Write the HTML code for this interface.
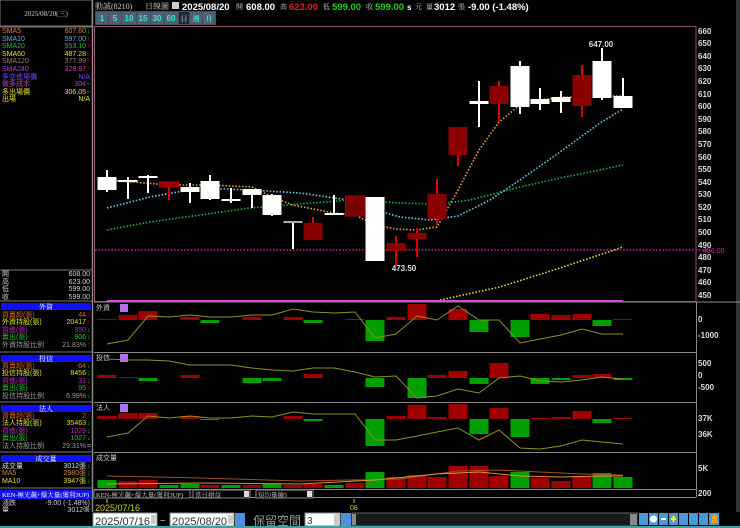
<!DOCTYPE html>
<html><head><meta charset="utf-8"><style>
body{margin:0;background:#000;width:740px;height:528px;overflow:hidden}
svg{display:block}
text{font-family:"Liberation Sans","Noto Sans CJK TC",sans-serif}
.s{font-family:"Liberation Serif","Noto Serif CJK SC",serif;font-size:7px}
.ax{font-size:8px;fill:#ddd;font-weight:bold}
</style></head><body>
<svg width="740" height="528" viewBox="0 0 740 528" xmlns="http://www.w3.org/2000/svg">
<rect width="740" height="528" fill="#000"/>
<rect x="0" y="0" width="92" height="26" fill="#000" stroke="#777"/>
<line x1="92.5" y1="0" x2="92.5" y2="513" stroke="#888" stroke-width="1.5"/>
<line x1="0" y1="27" x2="92" y2="27" stroke="#777"/>
<text x="46" y="16" text-anchor="middle" class="s" fill="#ccc">2025/08/20(三)</text>
<g class="s">
<text x="2" y="33" fill="#e08030">SMA5</text><text x="86" y="33" text-anchor="end" fill="#e08030">607.60</text><text x="87" y="33" fill="#0c0">↓</text>
<text x="2" y="41" fill="#60b0e0">SMA10</text><text x="86" y="41" text-anchor="end" fill="#60b0e0">597.00</text><text x="87" y="41" fill="#e00">↑</text>
<text x="2" y="48" fill="#20c020">SMA20</text><text x="86" y="48" text-anchor="end" fill="#20c020">553.10</text><text x="87" y="48" fill="#e00">↑</text>
<text x="2" y="56" fill="#e0e020">SMA60</text><text x="86" y="56" text-anchor="end" fill="#e0e020">487.28</text><text x="87" y="56" fill="#e00">↑</text>
<text x="2" y="63" fill="#a08060">SMA120</text><text x="86" y="63" text-anchor="end" fill="#a08060">377.99</text><text x="87" y="63" fill="#e00">↑</text>
<text x="2" y="71" fill="#c040c0">SMA240</text><text x="86" y="71" text-anchor="end" fill="#c040c0">328.87</text><text x="87" y="71" fill="#e00">↑</text>
<text x="2" y="79" fill="#8040ff">多空進場價</text><text x="90" y="79" text-anchor="end" fill="#8040ff">N/A</text>
<text x="2" y="86" fill="#c040c0">做多成本</text><text x="86" y="86" text-anchor="end" fill="#c040c0">304</text><text x="87" y="86" fill="#ccc">-</text>
<text x="2" y="94" fill="#e0e020">多出場價</text><text x="86" y="94" text-anchor="end" fill="#e0e020">306.05</text><text x="87" y="94" fill="#ccc">-</text>
<text x="2" y="101" fill="#e0e020">出場</text><text x="90" y="101" text-anchor="end" fill="#e0e020">N/A</text>
</g>
<line x1="0" y1="270" x2="92" y2="270" stroke="#777"/>
<g class="s" fill="#ccc">
<text x="2" y="276">開</text><text x="90" y="276" text-anchor="end">608.00</text>
<text x="2" y="284">高</text><text x="90" y="284" text-anchor="end">623.00</text>
<text x="2" y="291">低</text><text x="90" y="291" text-anchor="end">599.00</text>
<text x="2" y="299">收</text><text x="90" y="299" text-anchor="end">599.00</text>
</g>
<line x1="0" y1="301" x2="92" y2="301" stroke="#777"/>
<rect x="1" y="303" width="90" height="7" fill="#1010f0"/><text x="46" y="309" text-anchor="middle" class="s" fill="#fff">外資</text>
<g class="s">
<text x="2" y="317" fill="#e06020">買賣超(張)</text><text x="86" y="317" text-anchor="end" fill="#e06020">44</text><text x="87" y="317" fill="#e00">↑</text>
<text x="2" y="324" fill="#e0e020">外資持股(張)</text><text x="86" y="324" text-anchor="end" fill="#e0e020">20417</text><text x="87" y="324" fill="#e00">↑</text>
<text x="2" y="332" fill="#c020c0">買進(張)</text><text x="86" y="332" text-anchor="end" fill="#c020c0">950</text><text x="87" y="332" fill="#0c0">↓</text>
<text x="2" y="339" fill="#20c020">賣出(張)</text><text x="86" y="339" text-anchor="end" fill="#20c020">906</text><text x="87" y="339" fill="#0c0">↓</text>
<text x="2" y="347" fill="#999">外資持股比例</text><text x="86" y="347" text-anchor="end" fill="#999">21.83%</text><text x="87" y="347" fill="#e00">↑</text>
</g>
<line x1="0" y1="352" x2="92" y2="352" stroke="#777"/>
<rect x="1" y="355" width="90" height="7" fill="#1010f0"/><text x="46" y="361" text-anchor="middle" class="s" fill="#fff">投信</text>
<g class="s">
<text x="2" y="368" fill="#e06020">買賣超(張)</text><text x="86" y="368" text-anchor="end" fill="#e06020">-64</text><text x="87" y="368" fill="#0c0">↓</text>
<text x="2" y="375" fill="#e0e020">投信持股(張)</text><text x="86" y="375" text-anchor="end" fill="#e0e020">8456</text><text x="87" y="375" fill="#0c0">↓</text>
<text x="2" y="383" fill="#c020c0">買進(張)</text><text x="86" y="383" text-anchor="end" fill="#c020c0">31</text><text x="87" y="383" fill="#0c0">↓</text>
<text x="2" y="390" fill="#20c020">賣出(張)</text><text x="86" y="390" text-anchor="end" fill="#20c020">95</text><text x="87" y="390" fill="#e00">↑</text>
<text x="2" y="398" fill="#999">投信持股比例</text><text x="86" y="398" text-anchor="end" fill="#999">6.99%</text><text x="87" y="398" fill="#0c0">↓</text>
</g>
<line x1="0" y1="402" x2="92" y2="402" stroke="#777"/>
<rect x="1" y="405" width="90" height="7" fill="#1010f0"/><text x="46" y="411" text-anchor="middle" class="s" fill="#fff">法人</text>
<g class="s">
<text x="2" y="418" fill="#e06020">買賣超(張)</text><text x="86" y="418" text-anchor="end" fill="#e06020">2</text><text x="87" y="418" fill="#e00">↑</text>
<text x="2" y="425" fill="#e0e020">法人持股(張)</text><text x="86" y="425" text-anchor="end" fill="#e0e020">35463</text><text x="87" y="425" fill="#0c0">↓</text>
<text x="2" y="433" fill="#c020c0">買進(張)</text><text x="86" y="433" text-anchor="end" fill="#c020c0">1029</text><text x="87" y="433" fill="#0c0">↓</text>
<text x="2" y="440" fill="#20c020">賣出(張)</text><text x="86" y="440" text-anchor="end" fill="#20c020">1027</text><text x="87" y="440" fill="#0c0">↓</text>
<text x="2" y="448" fill="#999">法人持股比例</text><text x="86" y="448" text-anchor="end" fill="#999">29.31%</text><text x="87" y="448" fill="#ccc">=</text>
</g>
<line x1="0" y1="452" x2="92" y2="452" stroke="#777"/>
<rect x="1" y="455" width="90" height="7" fill="#1010f0"/><text x="46" y="461" text-anchor="middle" class="s" fill="#fff">成交量</text>
<g class="s">
<text x="2" y="468" fill="#ddd">成交量</text><text x="86" y="468" text-anchor="end" fill="#ddd">3012張</text><text x="87" y="468" fill="#0c0">↓</text>
<text x="2" y="475" fill="#e08030">MA5</text><text x="86" y="475" text-anchor="end" fill="#e08030">2980張</text><text x="87" y="475" fill="#0c0">↓</text>
<text x="2" y="483" fill="#e0e020">MA10</text><text x="86" y="483" text-anchor="end" fill="#e0e020">3947張</text><text x="87" y="483" fill="#0c0">↓</text>
</g>
<line x1="0" y1="488" x2="92" y2="488" stroke="#777"/>
<rect x="0" y="490" width="92" height="9" fill="#1010f0"/><text x="2" y="497" class="s" fill="#fff" style="font-size:6.5px">KEN-極光飆+爆大量(獲利3UP)</text>
<g class="s" fill="#ccc"><text x="2" y="505">漲跌</text><text x="90" y="505" text-anchor="end">-9.00 (-1.48%)</text>
<text x="2" y="512">量</text><text x="90" y="512" text-anchor="end">3012張</text></g>

<g>
<text x="95" y="9" class="s" fill="#ccc" style="font-size:8px">動誠(8210)</text>
<text x="145" y="9" class="s" fill="#ccc" style="font-size:8px">日線圖</text>
<rect x="172" y="2" width="7" height="7" fill="#ccc"/>
<text x="182" y="10" fill="#fff" font-weight="bold" style="font-size:9.5px">2025/08/20</text>
<text x="236" y="9" class="s" fill="#ccc">開</text><text x="246" y="10" fill="#fff" font-weight="bold" style="font-size:9.5px">608.00</text>
<text x="280" y="9" class="s" fill="#ccc">高</text><text x="289" y="10" fill="#e02020" font-weight="bold" style="font-size:9.5px">623.00</text>
<text x="323" y="9" class="s" fill="#ccc">低</text><text x="332" y="10" fill="#20d020" font-weight="bold" style="font-size:9.5px">599.00</text>
<text x="366" y="9" class="s" fill="#ccc">收</text><text x="375" y="10" fill="#20d020" font-weight="bold" style="font-size:9.5px">599.00</text>
<text x="407" y="10" fill="#fff" font-weight="bold" style="font-size:8px">s</text><text x="415" y="9" class="s" fill="#ccc">元</text>
<text x="426" y="9" class="s" fill="#ccc">量</text><text x="434" y="10" fill="#fff" font-weight="bold" style="font-size:9.5px">3012</text><text x="458" y="9" class="s" fill="#ccc">張</text>
<text x="468" y="10" fill="#fff" font-weight="bold" style="font-size:9.5px">-9.00 (-1.48%)</text>
</g>
<rect x="95" y="11" width="121" height="14" fill="#405060"/>
<g font-size="8" fill="#40e0e0" font-weight="bold" text-anchor="middle">
<rect x="96" y="12" width="12" height="12" fill="#506070"/><text x="102" y="21">1</text>
<rect x="109" y="12" width="12" height="12" fill="#506070"/><text x="115" y="21">5</text>
<rect x="122" y="12" width="14" height="12" fill="#506070"/><text x="129" y="21">10</text>
<rect x="137" y="12" width="13" height="12" fill="#506070"/><text x="143" y="21">15</text>
<rect x="151" y="12" width="13" height="12" fill="#506070"/><text x="157" y="21">30</text>
<rect x="165" y="12" width="13" height="12" fill="#506070"/><text x="171" y="21">60</text>
<rect x="179" y="12" width="10" height="12" fill="#202830"/><text x="184" y="21" class="s" fill="#999">日</text>
<rect x="190" y="12" width="12" height="12" fill="#506070"/><text x="196" y="21" class="s">週</text>
<rect x="203" y="12" width="12" height="12" fill="#506070"/><text x="209" y="21" class="s">月</text>
</g>

<rect x="94.5" y="26.5" width="601.5" height="275" fill="none" stroke="#905070"/>
<g class="ax">
<text x="698" y="34">660</text><text x="698" y="46">650</text><text x="698" y="59">640</text><text x="698" y="71">630</text><text x="698" y="84">620</text><text x="698" y="97">610</text><text x="698" y="109">600</text><text x="698" y="122">590</text><text x="698" y="134">580</text><text x="698" y="147">570</text><text x="698" y="160">560</text><text x="698" y="172">550</text><text x="698" y="185">540</text><text x="698" y="197">530</text><text x="698" y="210">520</text><text x="698" y="222">510</text><text x="698" y="235">500</text><text x="698" y="248">490</text><text x="698" y="260">480</text><text x="698" y="273">470</text><text x="698" y="285">460</text><text x="698" y="298">450</text>
</g>
<rect x="736" y="0" width="4" height="528" fill="#333"/>
<g fill="none" stroke-width="1.6" stroke-dasharray="1.5 1.8">
<line x1="95" y1="250" x2="712" y2="250" stroke="#d020a0"/>
<polyline stroke="#e0e040" points="440,300 500,287 560,268 623,247"/>
<polyline stroke="#20b040" points="107,230 150,222 200,215 250,208 300,204 350,200 400,203 437,204 470,200 520,187 560,178 600,170 623,165"/>
<polyline stroke="#70c8e8" points="107,208 150,197 200,188 250,190 300,193 350,200 375,210 400,217 430,220 458,216 490,200 520,180 560,152 600,123 623,109"/>
<polyline stroke="#f0a040" points="107,180 169,185 210,185 252,187 272,197 293,205 334,213 355,215 375,225 396,229 417,230 437,227 458,190 479,150 499,122 520,105 540,100 561,97 582,97 602,96 623,96"/>
</g>
<text x="703" y="253" font-size="7" fill="#d020a0">486.00</text>
<line x1="107" y1="301" x2="623" y2="301" stroke="#e040e0" stroke-width="2"/>
<g fill="#fff" stroke="none">
<rect x="106" y="170" width="2" height="22"/><rect x="97.5" y="177" width="19" height="13"/>
<rect x="127" y="177" width="2" height="22"/><rect x="118.5" y="180" width="19" height="2"/>
<rect x="147" y="175" width="2" height="18"/><rect x="138.5" y="176" width="19" height="2"/>
<rect x="189" y="183" width="2" height="20"/><rect x="180.5" y="187" width="19" height="5"/>
<rect x="209" y="175" width="2" height="25"/><rect x="200.5" y="181" width="19" height="18"/>
<rect x="230" y="188" width="2" height="15"/><rect x="221.5" y="199" width="19" height="2"/>
<rect x="251" y="189" width="2" height="19"/><rect x="242.5" y="189" width="19" height="6"/>
<rect x="271" y="194" width="2" height="22"/><rect x="262.5" y="195" width="19" height="20"/>
<rect x="292" y="222" width="2" height="27"/><rect x="283.5" y="221" width="19" height="2" fill="#aaa"/>
<rect x="333" y="195" width="2" height="20"/><rect x="324.5" y="213" width="19" height="2"/>
<rect x="365.5" y="197" width="19" height="64"/>
<rect x="478" y="81" width="2" height="46"/><rect x="469.5" y="101" width="19" height="3"/>
<rect x="519" y="61" width="2" height="53"/><rect x="510.5" y="66" width="19" height="41"/>
<rect x="539" y="88" width="2" height="22"/><rect x="530.5" y="99" width="19" height="5"/>
<rect x="560" y="91" width="2" height="22"/><rect x="551.5" y="97" width="19" height="5"/>
<rect x="601" y="48" width="2" height="52"/><rect x="592.5" y="61" width="19" height="37"/>
<rect x="622" y="78" width="2" height="30"/><rect x="613.5" y="96" width="19" height="12"/>
</g>
<g>
<rect x="168" y="182" width="2" height="18" fill="#e00000"/><rect x="159.5" y="182" width="19" height="5" fill="#900000" stroke="#c00000"/>
<rect x="312" y="217" width="2" height="23" fill="#e00000"/><rect x="303.5" y="223" width="19" height="17" fill="#8a0000"/>
<rect x="345.5" y="196" width="19" height="20" fill="#7a0000" stroke="#a00000"/>
<rect x="395" y="236" width="2" height="29" fill="#e00000"/><rect x="386.5" y="243" width="19" height="8" fill="#8a0000"/>
<rect x="416" y="228" width="2" height="29" fill="#e00000"/><rect x="407.5" y="233" width="19" height="6" fill="#8a0000"/>
<rect x="436" y="179" width="2" height="46" fill="#e00000"/><rect x="427.5" y="194" width="19" height="25" fill="#8a0000"/>
<rect x="457" y="127" width="2" height="39" fill="#e00000"/><rect x="448.5" y="127" width="19" height="28" fill="#8a0000"/>
<rect x="498" y="81" width="2" height="40" fill="#e00000"/><rect x="489.5" y="86" width="19" height="18" fill="#8a0000"/>
<rect x="581" y="65" width="2" height="52" fill="#e00000"/><rect x="572.5" y="75" width="19" height="31" fill="#8a0000"/>
</g>
<text x="404" y="271" text-anchor="middle" font-size="8" fill="#ddd" font-weight="bold">473.50</text>
<text x="601" y="47" text-anchor="middle" font-size="8" fill="#ddd" font-weight="bold">647.00</text>

<g fill="none" stroke="#888">
<line x1="94" y1="302" x2="740" y2="302"/>
<line x1="94" y1="352.5" x2="696" y2="352.5"/>
<line x1="94" y1="402.5" x2="696" y2="402.5"/>
<line x1="94" y1="452.5" x2="696" y2="452.5"/>
<line x1="94" y1="489.5" x2="696" y2="489.5"/>
<line x1="94" y1="497.5" x2="696" y2="497.5"/>
<line x1="696.5" y1="302" x2="696.5" y2="497"/>
</g>
<g class="s" fill="#ccc"><text x="96" y="310">外資</text><text x="96" y="360">投信</text><text x="96" y="410">法人</text><text x="96" y="460">成交量</text></g>
<g fill="#b070f0"><rect x="120" y="304" width="8" height="8"/><rect x="120" y="354" width="8" height="8"/><rect x="120" y="404" width="8" height="8"/></g>
<g class="ax"><text x="698" y="322">0</text><text x="698" y="338">-1000</text><text x="698" y="366">500</text><text x="698" y="378">0</text><text x="698" y="390">-500</text><text x="698" y="421">37K</text><text x="698" y="437">36K</text><text x="698" y="471">5K</text><text x="698" y="496">200</text></g>
<g>
<rect x="97.5" y="319" width="19" height="1" fill="#a00000"/><rect x="118.5" y="315" width="19" height="5" fill="#a00000"/><rect x="138.5" y="311" width="19" height="9" fill="#a00000"/><rect x="180.5" y="317" width="19" height="3" fill="#a00000"/><rect x="200.5" y="320" width="19" height="3" fill="#00a000"/><rect x="242.5" y="317" width="19" height="3" fill="#a00000"/><rect x="283.5" y="317" width="19" height="3" fill="#a00000"/><rect x="303.5" y="320" width="19" height="3" fill="#00a000"/><rect x="345.5" y="319" width="19" height="1" fill="#a00000"/><rect x="365.5" y="320" width="19" height="21" fill="#00a000"/><rect x="386.5" y="317" width="19" height="3" fill="#a00000"/><rect x="407.5" y="304" width="19" height="16" fill="#a00000"/><rect x="448.5" y="309" width="19" height="11" fill="#a00000"/><rect x="469.5" y="320" width="19" height="12" fill="#00a000"/><rect x="510.5" y="320" width="19" height="17" fill="#00a000"/><rect x="530.5" y="314" width="19" height="6" fill="#a00000"/><rect x="551.5" y="315" width="19" height="5" fill="#a00000"/><rect x="572.5" y="314" width="19" height="6" fill="#a00000"/><rect x="592.5" y="320" width="19" height="6" fill="#00a000"/><rect x="613.5" y="319" width="19" height="1" fill="#a00000"/>
<polyline fill="none" stroke="#909020" points="107,344 128,340 148,316 169,317 190,315 210,317 231,317 252,315 272,315 293,309 313,312 334,313 355,312 375,338 396,334 417,316 437,320 458,306 479,320 499,320 520,343 540,339 561,335 582,329 602,334 623,334"/>
</g>
<g>
<rect x="97.5" y="375" width="19" height="3" fill="#a00000"/><rect x="118.5" y="377" width="19" height="1" fill="#a00000"/><rect x="138.5" y="378" width="19" height="3" fill="#00a000"/><rect x="180.5" y="375" width="19" height="3" fill="#a00000"/><rect x="242.5" y="378" width="19" height="5" fill="#00a000"/><rect x="262.5" y="378" width="19" height="3" fill="#00a000"/><rect x="303.5" y="374" width="19" height="4" fill="#a00000"/><rect x="365.5" y="378" width="19" height="9" fill="#00a000"/><rect x="407.5" y="378" width="19" height="20" fill="#00a000"/><rect x="427.5" y="375" width="19" height="3" fill="#a00000"/><rect x="448.5" y="371" width="19" height="7" fill="#a00000"/><rect x="469.5" y="378" width="19" height="6" fill="#00a000"/><rect x="489.5" y="363" width="19" height="15" fill="#a00000"/><rect x="530.5" y="378" width="19" height="6" fill="#00a000"/><rect x="551.5" y="378" width="19" height="2" fill="#00a000"/><rect x="572.5" y="375" width="19" height="3" fill="#a00000"/><rect x="592.5" y="374" width="19" height="4" fill="#a00000"/><rect x="613.5" y="378" width="19" height="2" fill="#00a000"/>
<polyline fill="none" stroke="#909020" points="107,359 128,360 148,360 169,361 190,365 210,365 231,365 252,368 272,370 293,371 313,368 334,368 355,372 375,377 396,376 417,398 437,396 458,389 479,393 499,378 520,376 540,381 561,382 582,380 602,377 623,379"/>
</g>
<g>
<rect x="97.5" y="416" width="19" height="3" fill="#a00000"/><rect x="118.5" y="413" width="19" height="6" fill="#a00000"/><rect x="138.5" y="413" width="19" height="6" fill="#a00000"/><rect x="180.5" y="416" width="19" height="3" fill="#a00000"/><rect x="200.5" y="419" width="19" height="1" fill="#00a000"/><rect x="283.5" y="416" width="19" height="3" fill="#a00000"/><rect x="303.5" y="419" width="19" height="2" fill="#00a000"/><rect x="365.5" y="419" width="19" height="27" fill="#00a000"/><rect x="386.5" y="416" width="19" height="3" fill="#a00000"/><rect x="407.5" y="405" width="19" height="14" fill="#a00000"/><rect x="427.5" y="417" width="19" height="2" fill="#a00000"/><rect x="448.5" y="404" width="19" height="15" fill="#a00000"/><rect x="469.5" y="419" width="19" height="15" fill="#00a000"/><rect x="489.5" y="408" width="19" height="11" fill="#a00000"/><rect x="510.5" y="419" width="19" height="18" fill="#00a000"/><rect x="530.5" y="418" width="19" height="1" fill="#a00000"/><rect x="551.5" y="417" width="19" height="2" fill="#a00000"/><rect x="572.5" y="411" width="19" height="8" fill="#a00000"/><rect x="592.5" y="419" width="19" height="4" fill="#00a000"/><rect x="613.5" y="418" width="19" height="1" fill="#a00000"/>
<polyline fill="none" stroke="#909020" points="107,437 128,433 148,416 169,418 190,416 210,418 231,418 252,416 272,417 293,412 313,414 334,414 355,414 375,440 396,440 417,436 437,432 458,428 479,440 499,430 520,448 540,449 561,446 582,440 602,442 623,444"/>
</g>
<g>
<rect x="97.5" y="480" width="19" height="8" fill="#00a000"/><rect x="118.5" y="481" width="19" height="7" fill="#a00000"/><rect x="138.5" y="480" width="19" height="8" fill="#a00000"/><rect x="159.5" y="485" width="19" height="3" fill="#00a000"/><rect x="180.5" y="484" width="19" height="4" fill="#00a000"/><rect x="200.5" y="485" width="19" height="3" fill="#a00000"/><rect x="221.5" y="485" width="19" height="3" fill="#00a000"/><rect x="242.5" y="485" width="19" height="3" fill="#a00000"/><rect x="262.5" y="484" width="19" height="4" fill="#00a000"/><rect x="283.5" y="485" width="19" height="3" fill="#a00000"/><rect x="303.5" y="484" width="19" height="4" fill="#a00000"/><rect x="324.5" y="485" width="19" height="3" fill="#00a000"/><rect x="345.5" y="483" width="19" height="5" fill="#a00000"/><rect x="365.5" y="472" width="19" height="16" fill="#00a000"/><rect x="386.5" y="477" width="19" height="11" fill="#a00000"/><rect x="407.5" y="475" width="19" height="13" fill="#a00000"/><rect x="427.5" y="477" width="19" height="11" fill="#a00000"/><rect x="448.5" y="466" width="19" height="22" fill="#a00000"/><rect x="469.5" y="466" width="19" height="22" fill="#a00000"/><rect x="489.5" y="476" width="19" height="12" fill="#a00000"/><rect x="510.5" y="472" width="19" height="16" fill="#00a000"/><rect x="530.5" y="478" width="19" height="10" fill="#a00000"/><rect x="551.5" y="481" width="19" height="7" fill="#a00000"/><rect x="572.5" y="476" width="19" height="12" fill="#a00000"/><rect x="592.5" y="473" width="19" height="15" fill="#00a000"/><rect x="613.5" y="477" width="19" height="11" fill="#00a000"/>
<polyline fill="none" stroke="#a05020" points="107,476 200,478 300,481 400,479 458,471 499,470 540,472 582,474 623,475"/>
<polyline fill="none" stroke="#e09030" points="107,484 200,483 300,484 375,480 437,474 479,472 520,476 561,477 602,476 623,476"/>
</g>
<rect x="94" y="490" width="96" height="8" fill="#000" stroke="#888"/><text x="96" y="497" class="s" fill="#ccc" style="font-size:6.5px">KEN-極光飆+爆大量(獲利3UP)</text>
<rect x="193" y="490" width="57" height="8" fill="#000" stroke="#888"/><text x="195" y="497" class="s" fill="#ccc" style="font-size:6.5px">當日損益</text><rect x="244" y="491" width="5" height="6" fill="#ddd"/>
<rect x="256" y="490" width="57" height="8" fill="#000" stroke="#888"/><text x="258" y="497" class="s" fill="#ccc" style="font-size:6.5px">短均量擴5</text><rect x="307" y="491" width="5" height="6" fill="#ddd"/>
<line x1="107" y1="499" x2="107" y2="503" stroke="#cc0"/>
<text x="95" y="511" font-size="9" fill="#cccc20">2025/07/16</text>
<line x1="354" y1="499" x2="354" y2="503" stroke="#cc0"/>
<text x="350" y="510" font-size="7" fill="#cccc20">08</text>
<rect x="0" y="512" width="740" height="16" fill="#000"/>
<rect x="93" y="513" width="64" height="13" fill="#fff" stroke="#888"/><text x="95" y="525" font-size="11" fill="#333">2025/07/16</text><rect x="151" y="515" width="6" height="9" fill="#ccc"/>
<text x="160" y="524" font-size="10" fill="#ccc">~</text>
<rect x="170" y="513" width="64" height="13" fill="#fff" stroke="#888"/><text x="172" y="525" font-size="11" fill="#333">2025/08/20</text><rect x="228" y="515" width="6" height="9" fill="#ccc"/>
<rect x="235" y="513" width="10" height="13" fill="#5090e0"/>
<text x="253" y="525" font-size="12" fill="#999" font-family="Noto Sans CJK TC,sans-serif">保留空間</text>
<rect x="305" y="513" width="35" height="13" fill="#fff" stroke="#888"/><text x="307" y="524" font-size="10" fill="#333">3</text><rect x="334" y="514" width="6" height="11" fill="#ccc"/>
<rect x="341" y="513" width="10" height="13" fill="#5090e0"/>
<rect x="352" y="513" width="285" height="13" fill="#1a1a1a" stroke="#666"/><rect x="352" y="514" width="4" height="11" fill="#888"/><rect x="630" y="514" width="7" height="11" fill="#888"/>
<g><rect x="639" y="513" width="9" height="12" fill="#4a9ad8"/><rect x="649" y="513" width="9" height="12" fill="#4a9ad8"/><circle cx="653.5" cy="519" r="3.5" fill="#fff"/><rect x="659" y="513" width="9" height="12" fill="#4a9ad8"/><rect x="661" y="518" width="5" height="2" fill="#fff"/><rect x="669" y="513" width="9" height="12" fill="#4a9ad8"/><rect x="671" y="518" width="5" height="2" fill="#ff0"/><rect x="672.5" y="516" width="2" height="6" fill="#ff0"/><rect x="679" y="513" width="9" height="12" fill="#4a9ad8"/><rect x="689" y="513" width="9" height="12" fill="#4a9ad8"/><rect x="699" y="513" width="9" height="12" fill="#4a9ad8"/><rect x="709" y="513" width="10" height="12" fill="#4a9ad8"/><path d="M711 523 h7 l-1-2 v-4 a2.5 2.5 0 0 0 -5 0 v4z" fill="#f0a020"/></g>
<rect x="0" y="526" width="740" height="2" fill="#40a0a0"/>
</svg>
</body></html>
